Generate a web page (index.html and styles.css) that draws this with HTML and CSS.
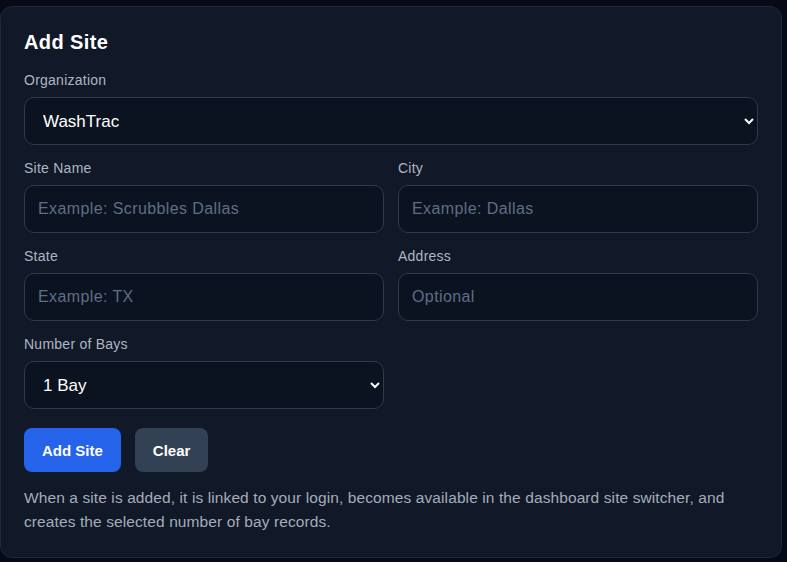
FILE: index.html
```html
<!DOCTYPE html>
<html lang="en">
<head>
<meta charset="utf-8">
<title>Add Site</title>
<link rel="stylesheet" href="styles.css">
</head>
<body>
<div class="page">
  <form class="card">
    <h2 class="title">Add Site</h2>
    <div class="field">
      <label class="label" for="org">Organization</label>
      <select id="org" class="control select"><option>WashTrac</option></select>
    </div>
    <div class="row">
      <div class="field">
        <label class="label" for="name">Site Name</label>
        <input id="name" class="control" placeholder="Example: Scrubbles Dallas">
      </div>
      <div class="field">
        <label class="label" for="city">City</label>
        <input id="city" class="control" placeholder="Example: Dallas">
      </div>
    </div>
    <div class="row">
      <div class="field">
        <label class="label" for="state">State</label>
        <input id="state" class="control" placeholder="Example: TX">
      </div>
      <div class="field">
        <label class="label" for="addr">Address</label>
        <input id="addr" class="control" placeholder="Optional">
      </div>
    </div>
    <div class="row">
      <div class="field">
        <label class="label" for="bays">Number of Bays</label>
        <select id="bays" class="control select"><option>1 Bay</option></select>
      </div>
    </div>
    <div class="actions">
      <button type="button" class="btn btn-primary">Add Site</button>
      <button type="button" class="btn btn-secondary">Clear</button>
    </div>
    <p class="help">When a site is added, it is linked to your login, becomes available in the dashboard site switcher, and creates the selected number of bay records.</p>
  </form>
</div>
</body>
</html>
```
FILE: styles.css
```css
* { box-sizing: border-box; }
html, body { margin: 0; background: #050a16; }
body {
  font-family: "Liberation Sans", Arial, sans-serif;
  color: #e5e7eb;
  color-scheme: dark;
}
.page { padding: 6px 5px 5px 0; }
.card {
  width: 782px;
  background: #111827;
  border: 1px solid #1f2937;
  border-radius: 12px;
  padding: 23px;
  display: flex;
  flex-direction: column;
  gap: 14px;
}
.title {
  margin: 0 0 3px;
  font-size: 20px;
  line-height: 24px;
  font-weight: 700;
  letter-spacing: 0.4px;
  color: #ffffff;
}
.row {
  display: grid;
  grid-template-columns: 1fr 1fr;
  gap: 14px;
}
.field { display: flex; flex-direction: column; gap: 8px; }
.label {
  font-size: 14px;
  line-height: 18px;
  letter-spacing: 0.25px;
  color: #aeb6c3;
}
.control {
  height: 48px;
  width: 100%;
  background: #0b1220;
  border: 1px solid #2f3a4b;
  border-radius: 10px;
  padding: 0 13px;
  font-family: inherit;
  font-size: 16px;
  letter-spacing: 0.4px;
  color: #ffffff;
  outline: none;
}
.control::placeholder { color: #5f6e84; }
.select { padding: 0 10px 0 14px; font-size: 17px; letter-spacing: 0; }
.actions { display: flex; gap: 14px; margin-top: 5px; }
.btn {
  height: 44px;
  border: none;
  border-radius: 8px;
  padding: 0 18px;
  font-family: inherit;
  font-size: 15px;
  font-weight: 700;
  color: #ffffff;
}
.btn-primary { background: #2563eb; }
.btn-secondary { background: #334155; }
.help {
  margin: 0;
  font-size: 15.5px;
  line-height: 24px;
  letter-spacing: 0.1px;
  color: #a3adbb;
}
```
